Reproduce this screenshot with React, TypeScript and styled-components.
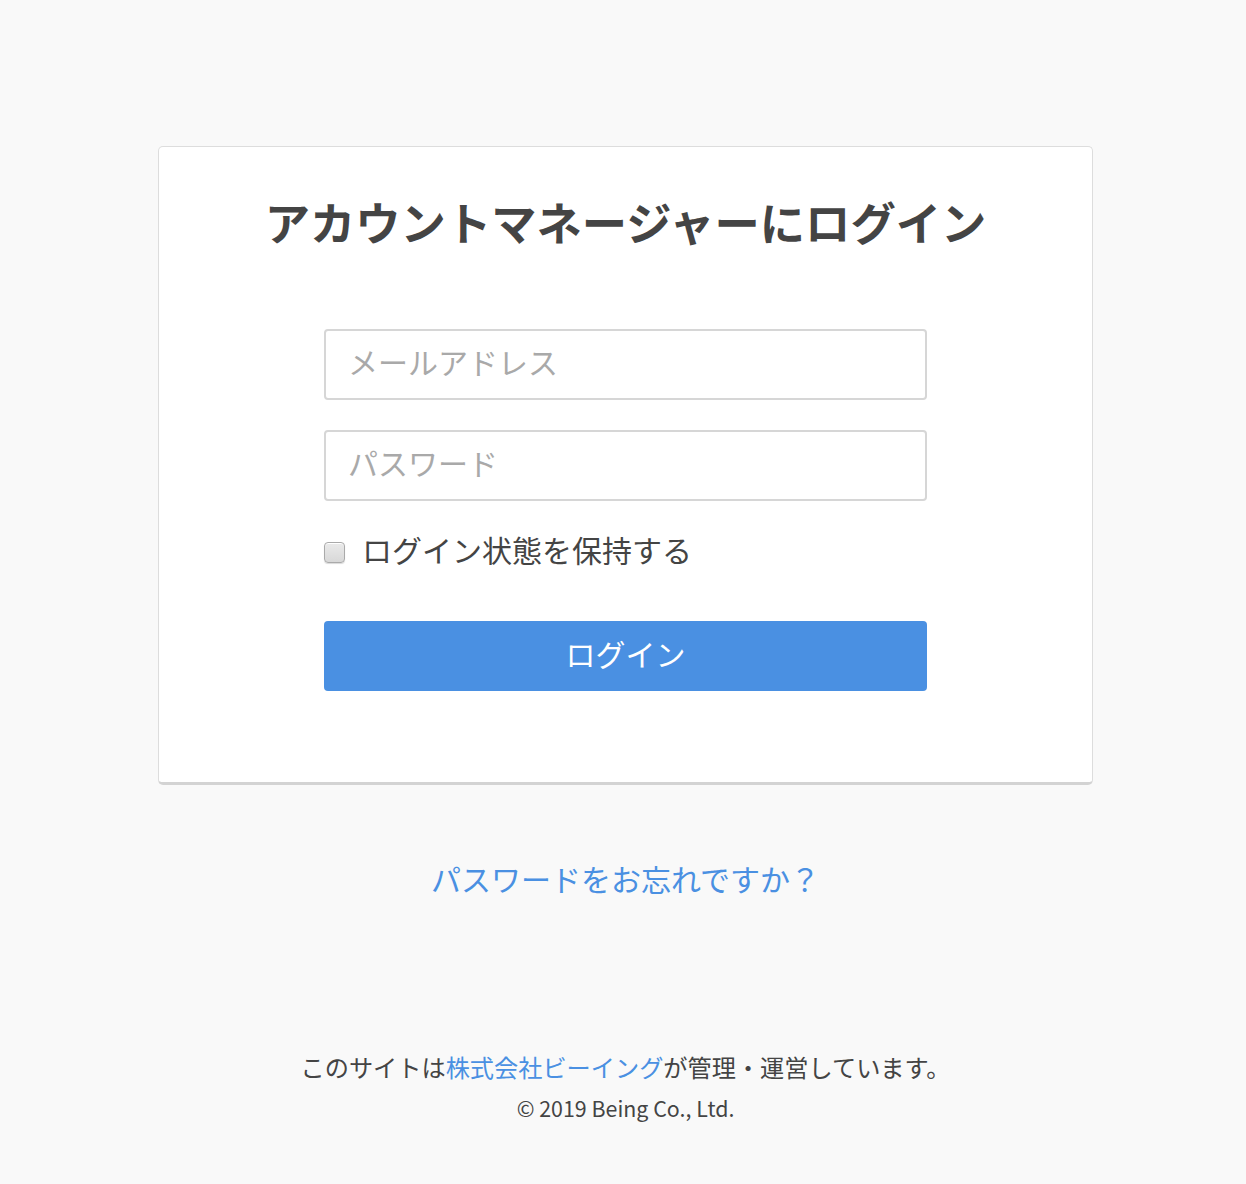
import React from "react";
import styled, { createGlobalStyle } from "styled-components";

const Global = createGlobalStyle`
  html, body { margin: 0; padding: 0; background: #f9f9f9; }
  body { font-family: "Noto Sans CJK JP", "Noto Sans", sans-serif; color: #444; }
  * { box-sizing: border-box; }
`;

const Page = styled.div`
  width: 1246px;
  min-height: 1184px;
  padding: 146px 0 0 5px;
  display: flex;
  flex-direction: column;
  align-items: center;
`;

const Card = styled.div`
  width: 935px;
  height: 639px;
  background: #fff;
  border: 1px solid #ddd;
  border-bottom: 3px solid #d3d3d3;
  border-radius: 5px;
  padding: 42px 0 0;
  display: flex;
  flex-direction: column;
  align-items: center;
`;

const Title = styled.h1`
  margin: 0;
  font-size: 45.3px;
  line-height: 64px;
  font-weight: 700;
  color: #444;
`;

const Form = styled.form`
  width: 603px;
  margin-top: 76px;
  display: flex;
  flex-direction: column;
`;

const Input = styled.input`
  width: 100%;
  height: 71px;
  border: 2px solid #d6d6d6;
  border-radius: 4px;
  padding: 0 22px 7px;
  font-family: inherit;
  font-size: 30px;
  color: #444;
  background: #fff;
  outline: none;
  & + & { margin-top: 30px; }
  &::placeholder { color: #a9a9a9; }
`;

const CheckRow = styled.label`
  display: flex;
  align-items: center;
  margin-top: 30px;
  height: 40px;
  gap: 17px;
  font-size: 30px;
  color: #444;
`;

const Check = styled.input`
  appearance: none;
  margin: 2px 0 0;
  width: 21px;
  height: 21px;
  border: 1px solid #aaa;
  border-radius: 4px;
  background: linear-gradient(#eaeaea, #d8d8d8);
  box-shadow: inset 0 1px 0 #fff, 0 1px 1px rgba(0,0,0,0.15);
`;

const CheckText = styled.span`
  position: relative;
  top: -2px;
`;

const Button = styled.button`
  margin-top: 50px;
  width: 100%;
  height: 70px;
  border: none;
  border-radius: 4px;
  background: #4a90e2;
  color: #fff;
  font-family: inherit;
  font-size: 30px;
  padding: 0 0 6px;
  cursor: pointer;
`;

const Forgot = styled.a`
  margin-top: 71px;
  font-size: 30px;
  line-height: 44px;
  color: #4a90e2;
  text-decoration: none;
`;

const Footer = styled.footer`
  margin-top: 150px;
  display: flex;
  flex-direction: column;
  align-items: center;
  color: #444;
`;

const FooterLine = styled.p`
  margin: 0;
  font-size: 24.2px;
  line-height: 34px;
`;

const FooterLink = styled.a`
  color: #4a90e2;
  text-decoration: none;
`;

const Copy = styled.p`
  margin: 9px 0 0;
  font-size: 21.4px;
  line-height: 30px;
`;

export default function App() {
  return (
    <>
      <Global />
      <Page>
        <Card>
          <Title>アカウントマネージャーにログイン</Title>
          <Form onSubmit={(e) => e.preventDefault()}>
            <Input type="email" placeholder="メールアドレス" />
            <Input type="password" placeholder="パスワード" />
            <CheckRow>
              <Check type="checkbox" />
              <CheckText>ログイン状態を保持する</CheckText>
            </CheckRow>
            <Button type="submit">ログイン</Button>
          </Form>
        </Card>
        <Forgot href="#">パスワードをお忘れですか？</Forgot>
        <Footer>
          <FooterLine>
            このサイトは<FooterLink href="#">株式会社ビーイング</FooterLink>が管理・運営しています。
          </FooterLine>
          <Copy>© 2019 Being Co., Ltd.</Copy>
        </Footer>
      </Page>
    </>
  );
}
